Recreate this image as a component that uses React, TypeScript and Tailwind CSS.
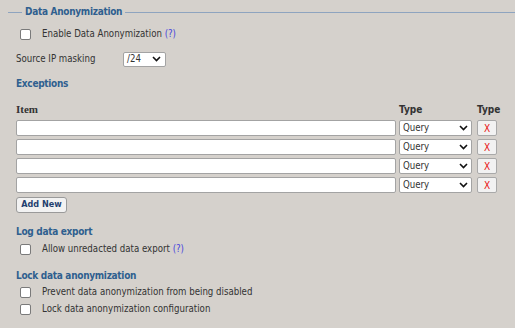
import React from "react";

const font = { fontFamily: "'DejaVu Sans Condensed', 'DejaVu Sans', sans-serif" };

function Box() {
  return <div className="w-[11px] h-[11px] bg-white border border-[#7a7a7a] rounded-[2px] shrink-0" />;
}

function CheckRow({ label, help, mt }: { label: string; help?: boolean; mt: string }) {
  return (
    <div className={`flex items-center h-[14px] pl-[20px] ${mt}`}>
      <Box />
      <span className="ml-[11px] text-[9.6px] text-[#333]">
        {label}
        {help && <span className="text-[#4545dd]"> (?)</span>}
      </span>
    </div>
  );
}

function Chevron() {
  return (
    <svg width="9" height="6" viewBox="0 0 9 6" className="shrink-0">
      <path d="M1 1 L4.5 4.5 L8 1" stroke="#111" strokeWidth="1.6" fill="none" />
    </svg>
  );
}

function Row() {
  return (
    <div className="flex items-center h-[16px]">
      <div className="w-[380px] h-[16px] bg-white border border-[#a3a3a3] rounded-[2px]" />
      <div className="ml-[3px] w-[73px] h-[16px] bg-white border border-[#a3a3a3] rounded-[2px] flex items-center justify-between pl-[3px] pr-[3px] text-[9.6px] text-[#333]">
        <span>Query</span>
        <Chevron />
      </div>
      <div className="ml-[5px] w-[20px] h-[16px] bg-[#f2f2f2] border border-[#a9a9a9] rounded-[2px] flex items-center justify-center text-[10px] text-[#e81010]">
        X
      </div>
    </div>
  );
}

export default function App() {
  return (
    <div className="w-[515px] h-[328px] bg-[#d5d1cc] overflow-hidden pt-[5px]" style={font}>
      <fieldset className="ml-[8px] border-t border-[#8ea4bf]">
        <legend className="ml-[14px] px-[3px] leading-[14px] text-[10px] tracking-[-0.3px] font-bold text-[#2f5f8f]">
          Data Anonymization
        </legend>
        <div className="-ml-[8px]">
          <CheckRow label="Enable Data Anonymization" help mt="mt-[8px]" />
          <div className="flex flex-col pl-[16px]">
            <div className="flex items-center h-[16px] mt-[10px]">
              <span className="w-[107px] text-[9.6px] text-[#333]">Source IP masking</span>
              <div className="w-[43px] h-[15px] bg-white border border-[#a3a3a3] rounded-[2px] flex items-center justify-between pl-[3px] pr-[4px] text-[9.6px] text-[#333]">
                <span>/24</span>
                <Chevron />
              </div>
            </div>
            <div className="flex items-center h-[14px] mt-[9px] text-[10px] tracking-[-0.3px] font-bold text-[#2f5f8f]">Exceptions</div>
            <div className="flex items-center h-[14px] mt-[12px] text-[10px] font-bold text-[#333]">
              <span className="w-[383px] text-[11px]" style={{ fontFamily: "'Liberation Serif', serif" }}>Item</span>
              <span className="w-[78px]">Type</span>
              <span>Type</span>
            </div>
            <div className="flex flex-col gap-[3px] mt-[4px]">
              <Row />
              <Row />
              <Row />
              <Row />
            </div>
            <div className="mt-[4px] w-[51px] h-[16px] bg-[#f2f2f2] border border-[#9a9a9a] rounded-[3px] flex items-center justify-center text-[9px] font-bold text-[#1f3f6f]">
              Add New
            </div>
            <div className="flex items-center h-[14px] mt-[11px] text-[10px] tracking-[-0.3px] font-bold text-[#2f5f8f]">Log data export</div>
          </div>
          <CheckRow label="Allow unredacted data export" help mt="mt-[4px]" />
          <div className="flex items-center h-[14px] mt-[12px] pl-[16px] text-[10px] tracking-[-0.3px] font-bold text-[#2f5f8f]">Lock data anonymization</div>
          <CheckRow label="Prevent data anonymization from being disabled" mt="mt-[3px]" />
          <CheckRow label="Lock data anonymization configuration" mt="mt-[3px]" />
        </div>
      </fieldset>
    </div>
  );
}
